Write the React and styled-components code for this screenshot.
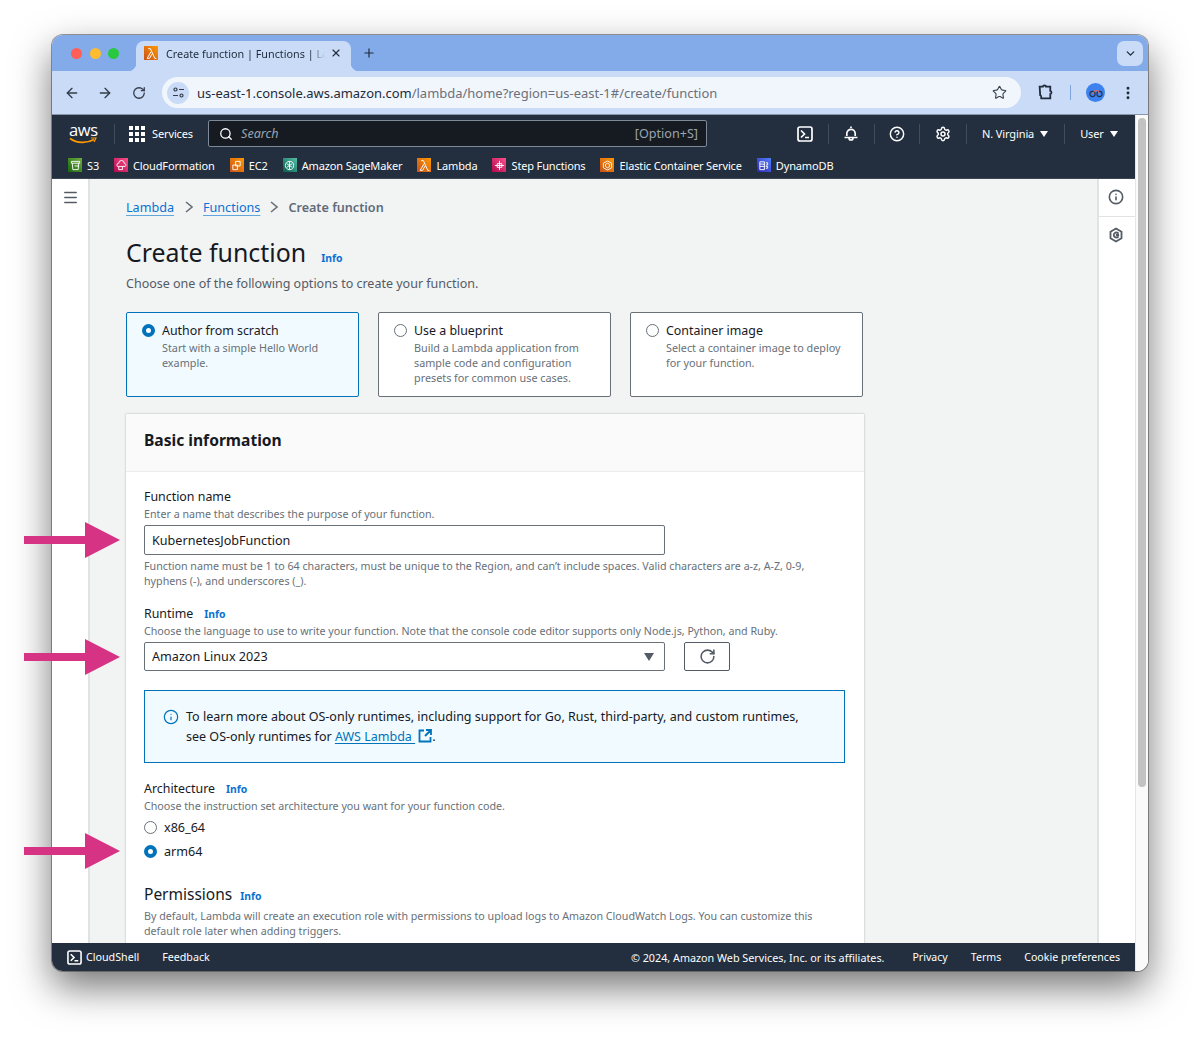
import React from 'react'
import styled, { createGlobalStyle } from 'styled-components'
import {
  ArrowLeft, ArrowRight, RotateCw, Star, MoreVertical, ChevronDown, Search,
  CircleHelp, Settings, Menu, Info, X, Plus,
} from 'lucide-react'

const GlobalStyle = createGlobalStyle`
  html, body { margin: 0; padding: 0; background: #fff; }
  body { font-family: "Noto Sans", "Open Sans", sans-serif; }
  * { box-sizing: border-box; }
`

const Page = styled.div`
  position: relative;
  width: 1200px;
  height: 1040px;
  padding: 35px 52px 69px;
`

const BrowserWindow = styled.div`
  display: flex;
  flex-direction: column;
  height: 936px;
  border-radius: 11px;
  overflow: hidden;
  background: #fff;
  box-shadow: 0 0 0 1px rgba(70, 70, 70, .55), 0 16px 38px rgba(0, 0, 0, .55);
`

const TabStrip = styled.div`
  display: flex;
  align-items: flex-end;
  height: 36px;
  flex: none;
  background: #84abe9;
  position: relative;
`

const Lights = styled.div`
  display: flex;
  gap: 7.500px;
  align-self: center;
  margin: 0 17px 0 19px;
`

const Light = styled.span`
  width: 11px;
  height: 11px;
  border-radius: 50%;
  background: ${p => p.$color};
`

const Tab = styled.div`
  position: relative;
  display: flex;
  align-items: center;
  width: 215px;
  height: 30px;
  padding: 0 0 6px 8px;
  background: #c9dbf6;
  border-radius: 8px 8px 0 0;
  font-size: 10.800px;
  color: #1f2a3a;
  white-space: nowrap;

  &::before, &::after {
    content: "";
    position: absolute;
    bottom: 0;
    width: 8px;
    height: 8px;
  }
  &::before {
    left: -8px;
    background: radial-gradient(circle at 0 0, transparent 8px, #c9dbf6 8.500px);
  }
  &::after {
    right: -8px;
    background: radial-gradient(circle at 100% 0, transparent 8px, #c9dbf6 8.500px);
  }
`

const TabTitle = styled.span`
  width: 164px;
  margin-left: 8px;
  overflow: hidden;
  -webkit-mask-image: linear-gradient(90deg, #000 88%, transparent 97%);
  mask-image: linear-gradient(90deg, #000 88%, transparent 97%);
`

const NewTab = styled.span`
  display: flex;
  align-self: center;
  margin-left: 11px;
  color: #1f2a3a;
`

const TabMenu = styled.span`
  position: absolute;
  right: 5px;
  top: 6px;
  width: 26px;
  height: 25px;
  border-radius: 7px;
  background: #c9dbf6;
  display: flex;
  align-items: center;
  justify-content: center;
  color: #1f2a3a;
`

const Toolbar = styled.div`
  display: flex;
  align-items: center;
  height: 44px;
  flex: none;
  background: #c9dbf6;
  padding: 0 12px 0 11px;
  color: #3a4350;
  border-bottom: 1px solid #8a97a8;
`

const ToolIcon = styled.span`
  display: flex;
  width: 17px;
  justify-content: center;
  margin-right: ${p => p.$gap || 0}px;
  color: #333c48;
`

const Omnibox = styled.div`
  display: flex;
  align-items: center;
  width: 859px;
  height: 31px;
  margin-left: 15px;
  padding: 0 14px 0 5px;
  border-radius: 16px;
  background: #f1f6fd;
  font-size: 12.980px;
  color: #6b7079;
  white-space: nowrap;
`

const SiteBadge = styled.span`
  display: flex;
  align-items: center;
  justify-content: center;
  width: 22px;
  height: 22px;
  border-radius: 50%;
  background: #c9dbf6;
  margin-right: 8px;
  flex: none;
`

const Host = styled.span`
  color: #1f2a3a;
`

const OmniStar = styled.span`
  display: flex;
  margin-left: auto;
  color: #3a4350;
`

const ToolbarRight = styled.div`
  display: flex;
  align-items: center;
  margin-left: 16px;
  color: #1f2a3a;
`

const ToolDivider = styled.span`
  width: 1px;
  height: 15px;
  background: #7ea4dc;
  margin: 0 15px 0 16px;
`

const Avatar = styled.span`
  display: flex;
  align-items: center;
  justify-content: center;
  width: 19px;
  height: 19px;
  border-radius: 50%;
  background: #3b82f0;
  margin-right: 15px;
`

const Viewport = styled.div`
  display: flex;
  flex: 1;
  min-height: 0;
`

const ConsoleColumn = styled.div`
  display: flex;
  flex-direction: column;
  width: 1083px;
  flex: none;
`

const Scrollbar = styled.div`
  flex: 1;
  background: #fafafa;
  border-left: 1px solid #e6e6e6;
  padding: 3px 2px 0 2px;
`

const ScrollThumb = styled.div`
  height: 669px;
  border-radius: 4px;
  background: #c2c2c2;
`

const TopNav = styled.div`
  flex: none;
  height: 64px;
  background: #232f3e;
  color: #fff;
  border-bottom: 1px solid #3a4452;
`

const NavRow = styled.div`
  display: flex;
  align-items: center;
  height: 37px;
  font-size: 11px;
  letter-spacing: -.12px;
`

const AwsLogo = styled.div`
  position: relative;
  width: 29px;
  height: 24px;
  margin-left: 17px;
  flex: none;
`

const AwsText = styled.span`
  display: block;
  font: 16.500px/16px "Open Sans", sans-serif;
  letter-spacing: -.4px;
  color: #fff;
`

const Smile = styled.svg`
  position: absolute;
  left: 0;
  top: 15px;
`

const NavDivider = styled.span`
  width: 1px;
  height: 20px;
  background: #414d5c;
  flex: none;
  margin: 0 ${p => p.$right ?? 15}px 0 ${p => p.$left ?? 15}px;
`

const ServicesGrid = styled.svg`
  flex: none;
  margin-right: 7px;
`

const SearchBox = styled.div`
  display: flex;
  align-items: center;
  flex: none;
  width: 499px;
  height: 27px;
  margin-left: 15px;
  padding: 0 8px 0 10px;
  background: #161b22;
  border: 1px solid #7d8998;
  border-radius: 2px;
  font-size: 12.600px;
  letter-spacing: 0;
  color: #9aa4b0;
`

const SearchHint = styled.span`
  font-style: italic;
  margin-left: 8px;
`

const Shortcut = styled.span`
  margin-left: auto;
`

const NavIcon = styled.span`
  display: flex;
  justify-content: center;
  flex: none;
  width: 16px;
  margin-left: ${p => p.$left ?? 0}px;
`

const Region = styled.span`
  display: flex;
  align-items: center;
  gap: 6px;
  white-space: nowrap;
`

const Caret = styled.span`
  width: 0;
  height: 0;
  border-left: 4.500px solid transparent;
  border-right: 4.500px solid transparent;
  border-top: 6px solid currentColor;
`

const FavRow = styled.div`
  display: flex;
  align-items: center;
  gap: 15px;
  height: 26px;
  padding-left: 16px;
  font-size: 11px;
  letter-spacing: -.14px;
`

const Fav = styled.span`
  display: flex;
  align-items: center;
  gap: 5px;
  white-space: nowrap;
`

const ServiceIcon = styled.span`
  display: flex;
  align-items: center;
  justify-content: center;
  width: 14px;
  height: 14px;
  flex: none;
  background: ${p => p.$bg};
`

const Body = styled.div`
  display: flex;
  flex: 1;
  min-height: 0;
  overflow: hidden;
`

const LeftRail = styled.div`
  width: 38px;
  flex: none;
  background: #fff;
  border-right: 2px solid #e0e3e3;
  padding: 10px 0 0 10px;
  color: #545b64;
`

const Main = styled.div`
  width: 1007px;
  flex: none;
  background: #f2f3f3;
  padding: 18px 0 0 36px;
  overflow: hidden;
`

const RightRail = styled.div`
  flex: 1;
  background: #fff;
  border-left: 2px solid #e0e3e3;
  color: #545b64;
`

const RailButton = styled.div`
  display: flex;
  justify-content: center;
  height: ${p => p.$h}px;
  padding: ${p => p.$top}px 2px 0 0;
  border-bottom: ${p => (p.$line ? '1px solid #e0e3e3' : 'none')};
`

const Breadcrumbs = styled.div`
  display: flex;
  align-items: center;
  height: 20px;
  font-size: 12.600px;
`

const Crumb = styled.a`
  color: #0972d3;
  text-decoration: underline;
  text-underline-offset: 3px;
  text-decoration-color: #5ea6dd;
`

const CrumbSep = styled.svg`
  margin: 0 ${p => p.$right ?? 10}px 0 ${p => p.$left ?? 10}px;
  flex: none;
`

const CrumbCurrent = styled.span`
  color: #5f6b7a;
  font-weight: 600;
`

const TitleRow = styled.div`
  display: flex;
  align-items: baseline;
  margin-top: 18px;
  height: 34px;
`

const Title = styled.h1`
  margin: 0;
  font-size: 24.900px;
  line-height: 34px;
  font-weight: 400;
  color: #16191f;
`

const InfoLink = styled.a`
  margin-left: ${p => p.$left ?? 11}px;
  font-size: 10.400px;
  font-weight: 700;
  color: #0972d3;
`

const Subtitle = styled.p`
  margin: 5px 0 0;
  font-size: 12.500px;
  line-height: 20px;
  color: #545b64;
`

const CardRow = styled.div`
  display: flex;
  gap: 19px;
  margin-top: 18px;
`

const OptionCard = styled.div`
  display: flex;
  gap: 7px;
  width: 233px;
  height: 85px;
  padding: 11px 15px;
  border-radius: 2px;
  border: 1px solid ${p => (p.$active ? '#0073bb' : '#687078')};
  background: ${p => (p.$active ? '#f1faff' : '#fff')};
`

const Radio = styled.span`
  display: block;
  flex: none;
  width: 13px;
  height: 13px;
  margin-top: ${p => p.$top ?? 0}px;
  border-radius: 50%;
  background: #fff;
  border: ${p => (p.$on ? '4px solid #0073bb' : '1px solid #687078')};
`

const OptionTitle = styled.div`
  font-size: 12.400px;
  line-height: 14px;
  color: #16191f;
`

const OptionText = styled.div`
  margin-top: 2px;
  font-size: 10.800px;
  line-height: 15px;
  color: #687078;
`

const Panel = styled.section`
  width: 738px;
  height: 600px;
  margin-top: 17px;
  background: #fff;
  box-shadow: 0 0 2px rgba(0, 28, 36, .3);
`

const PanelHead = styled.div`
  height: 58px;
  padding: 16px 18px 0;
  background: #fafafa;
  border-bottom: 1px solid #eaeded;
  font-size: 15.600px;
  line-height: 20px;
  font-weight: 700;
  color: #16191f;
`

const PanelBody = styled.div`
  padding: 17px 18px 0;
`

const FieldLabel = styled.div`
  display: flex;
  align-items: baseline;
  margin-top: ${p => p.$top ?? 0}px;
  font-size: 12.400px;
  line-height: 16px;
  color: #16191f;
`

const SectionLabel = styled(FieldLabel)`
  font-size: 15.500px;
  line-height: 20px;
`

const Hint = styled.div`
  margin-top: ${p => p.$top ?? 2}px;
  font-size: 10.700px;
  line-height: 15px;
  color: #687078;
  white-space: nowrap;
`

const InputBox = styled.div`
  display: flex;
  align-items: center;
  width: 521px;
  height: 30px;
  margin-top: 3px;
  padding: 0 7px;
  background: #fff;
  border: 1px solid #687078;
  border-radius: 2px;
  font-size: 12.600px;
  color: #16191f;
`

const SelectRow = styled.div`
  display: flex;
  gap: 19px;
  margin-top: 3px;
`

const SelectBox = styled(InputBox)`
  justify-content: space-between;
  margin-top: 0;
  height: 29px;
  padding-right: 10px;
  color: #16191f;
`

const SelectCaret = styled(Caret)`
  color: #545b64;
  border-left-width: 5px;
  border-right-width: 5px;
  border-top-width: 8px;
`

const RefreshButton = styled.div`
  display: flex;
  align-items: center;
  justify-content: center;
  width: 46px;
  height: 29px;
  border: 1px solid #545b64;
  border-radius: 2px;
  color: #545b64;
`

const Alert = styled.div`
  display: flex;
  gap: 7px;
  width: 701px;
  height: 73px;
  margin-top: 19px;
  padding: 16px 18px;
  background: #f1faff;
  border: 1px solid #0073bb;
  font-size: 12.530px;
  line-height: 20px;
  color: #16191f;
`

const AlertIcon = styled.span`
  display: flex;
  flex: none;
  margin-top: 2px;
  color: #0073bb;
`

const AlertLink = styled.a`
  color: #0073bb;
  text-decoration: underline;
  text-underline-offset: 2px;
`

const ExternalIcon = styled.svg`
  vertical-align: -2px;
  margin-left: 3px;
`

const RadioRow = styled.div`
  display: flex;
  align-items: center;
  gap: 7px;
  height: 24px;
  font-size: 12.600px;
  color: #16191f;
`

const RadioGroup = styled.div`
  margin-top: 1px;
`

const CallArrow = styled.svg`
  position: absolute;
  left: 24px;
  top: ${p => p.$top}px;
`

const Footer = styled.div`
  display: flex;
  align-items: center;
  flex: none;
  height: 28px;
  padding: 0 15px 0 15px;
  background: #232f3e;
  color: #fff;
  font-size: 10.700px;
  white-space: nowrap;
`

const FooterLink = styled.span`
  display: flex;
  align-items: center;
  gap: 4px;
  margin-left: ${p => p.$left ?? 0}px;
`

const FooterRight = styled.div`
  display: flex;
  gap: 23px;
  margin-left: auto;
  font-size: 10.600px;
`

const Copyright = styled.span`
  font-size: 10.770px;
  margin-right: 5px;
`

const TerminalIcon = ({ size = 16 }) => (
  <svg width={size} height={size} viewBox="0 0 16 16" fill="none" stroke="currentColor" strokeWidth="1.700">
    <rect x="1" y="1" width="14" height="14" rx="2" />
    <path d="M4 4.500 7.500 8 4 11.500M8 11.500h4" />
  </svg>
)

const ConsoleBell = () => (
  <svg width="17" height="17" viewBox="0 0 16 16" fill="none" stroke="currentColor" strokeWidth="1.700">
    <path d="M8 1v1.500M3.800 10.500V8a4.200 4.200 0 0 1 8.400 0v2.500M1.500 12h13M6 12.500a2 2 0 0 0 4 0" />
  </svg>
)

const LambdaGlyph = () => (
  <svg width="13" height="13" viewBox="0 0 12 12" fill="none" stroke="#fff" strokeWidth=".9">
    <path d="M3 1.500h2L9 10.500h1.500M5.500 4.500 2 10.500h2.200L6.500 6.500" />
  </svg>
)

const BoxGlyph = ({ d }) => (
  <svg width="11" height="11" viewBox="0 0 12 12" fill="none" stroke="#fff" strokeWidth="1">
    <path d={d} />
  </svg>
)

const services = [
  { name: 'S3', bg: 'linear-gradient(45deg, #1b660f, #6cae3e)', icon: <BoxGlyph d="M1.500 1.500h9v2h-9zM2.500 3.500l.6 7h5.800l.6-7M5 6.500h5" /> },
  { name: 'CloudFormation', bg: 'linear-gradient(45deg, #b0084d, #ff4f8b)', icon: <BoxGlyph d="M3 7.500a2 2 0 0 1 0-4 3 3 0 0 1 6 0 2 2 0 0 1 1 3.500H3zM3 7.500v3h4v-3" /> },
  { name: 'EC2', bg: 'linear-gradient(45deg, #c8511b, #ff9900)', icon: <BoxGlyph d="M5 1.500h5v5H5zM2 5.500h5v5H2z" /> },
  { name: 'Amazon SageMaker', bg: 'linear-gradient(45deg, #055f4e, #56c0a7)', icon: <BoxGlyph d="M6 1.500a4.500 4.500 0 1 0 0 9 4.500 4.500 0 0 0 0-9zM6 1.500v9M3 4l3 2 3-2M3 8l3-2 3 2" /> },
  { name: 'Lambda', bg: 'linear-gradient(45deg, #c8511b, #ff9900)', icon: <LambdaGlyph /> },
  { name: 'Step Functions', bg: 'linear-gradient(45deg, #b0084d, #ff4f8b)', icon: <BoxGlyph d="M6 1v10M1 6h10M3.500 4h5v4h-5z" /> },
  { name: 'Elastic Container Service', bg: 'linear-gradient(45deg, #c8511b, #ff9900)', icon: <BoxGlyph d="M6 1 10.500 3.500v5L6 11 1.500 8.500v-5zM6 3.500l2.200 1.300v2.400L6 8.500 3.800 7.200V4.800z" /> },
  { name: 'DynamoDB', bg: 'linear-gradient(45deg, #2e27ad, #527fff)', icon: <BoxGlyph d="M2 2h5v8.500H2zM2 4.500h5M2 7h5M8.500 3h2v2.500h-2M8.500 7h2v2h-2" /> },
]

const BlockArrow = ({ top }) => (
  <CallArrow $top={top} width="96" height="36" viewBox="0 0 96 36">
    <path d="M0 14h61V0l35 18-35 18V22H0z" fill="#d63384" />
  </CallArrow>
)

const App = () => {
  return (
    <Page>
      <GlobalStyle />
      <BrowserWindow>
        <TabStrip>
          <Lights>
            <Light $color="#fe5f57" />
            <Light $color="#febc2e" />
            <Light $color="#28c840" />
          </Lights>
          <Tab>
            <ServiceIcon $bg="linear-gradient(45deg, #c8511b, #ff9900)"><LambdaGlyph /></ServiceIcon>
            <TabTitle>Create function | Functions | Lambda</TabTitle>
            <X size={12} strokeWidth={2.200} />
          </Tab>
          <NewTab><Plus size={14} strokeWidth={2} /></NewTab>
          <TabMenu><ChevronDown size={13} strokeWidth={2.400} /></TabMenu>
        </TabStrip>

        <Toolbar>
          <ToolIcon $gap={16}><ArrowLeft size={16} /></ToolIcon>
          <ToolIcon $gap={17}><ArrowRight size={16} /></ToolIcon>
          <ToolIcon><RotateCw size={14} strokeWidth={2.200} /></ToolIcon>
          <Omnibox>
            <SiteBadge>
              <svg width="13" height="13" viewBox="0 0 13 13" fill="none" stroke="#333c48" strokeWidth="1.200">
                <circle cx="3.500" cy="3.500" r="1.500" />
                <path d="M7 3.500h5M1 9.500h5" />
                <circle cx="9.500" cy="9.500" r="1.500" />
              </svg>
            </SiteBadge>
            <Host>us-east-1.console.aws.amazon.com</Host>/lambda/home?region=us-east-1#/create/function
            <OmniStar><Star size={15} strokeWidth={1.800} /></OmniStar>
          </Omnibox>
          <ToolbarRight>
            <svg width="17" height="17" viewBox="0 0 16 16" fill="none" stroke="currentColor" strokeWidth="1.700">
              <path d="M2.500 2.500h3c0-1.500 3-1.500 3 0h4v4c1.500 0 1.500 3 0 3v4h-8.500c0-1.500 0-3-1-3z" />
            </svg>
            <ToolDivider />
            <Avatar>
              <svg width="14" height="10" viewBox="0 0 14 10" fill="none" stroke="#26324a" strokeWidth="1.100">
                <circle cx="3.500" cy="6" r="2.600" />
                <circle cx="10.500" cy="6" r="2.600" />
                <path d="M3.500 6 6 2.500h3L10.500 6" stroke="#e06a5a" />
              </svg>
            </Avatar>
            <MoreVertical size={16} strokeWidth={2.400} />
          </ToolbarRight>
        </Toolbar>

        <Viewport>
          <ConsoleColumn>
            <TopNav>
              <NavRow>
                <AwsLogo>
                  <AwsText>aws</AwsText>
                  <Smile width="28" height="9" viewBox="0 0 28 9" fill="none">
                    <path d="M1 1.500c7 5 17 5 24 1" stroke="#ff9900" strokeWidth="1.600" />
                    <path d="M22 1h5l-2 4" stroke="#ff9900" strokeWidth="1.200" />
                  </Smile>
                </AwsLogo>
                <NavDivider $left={16} $right={14} />
                <ServicesGrid width="16" height="16" viewBox="0 0 16 16" fill="#fff">
                  {[0, 6, 12].flatMap(y => [0, 6, 12].map(x => (
                    <rect key={`${x}-${y}`} x={x} y={y} width="4" height="4" />
                  )))}
                </ServicesGrid>
                Services
                <SearchBox>
                  <Search size={14} color="#fff" strokeWidth={2.200} />
                  <SearchHint>Search</SearchHint>
                  <Shortcut>[Option+S]</Shortcut>
                </SearchBox>
                <NavIcon $left={90}><TerminalIcon /></NavIcon>
                <NavDivider $left={15} $right={14} />
                <NavIcon><ConsoleBell /></NavIcon>
                <NavDivider $left={15} $right={14} />
                <NavIcon><CircleHelp size={16} strokeWidth={2.200} /></NavIcon>
                <NavDivider $left={14} $right={15} />
                <NavIcon><Settings size={16} strokeWidth={2.200} /></NavIcon>
                <NavDivider $left={15} />
                <Region>N. Virginia <Caret /></Region>
                <NavDivider $left={16} />
                <Region>User <Caret /></Region>
              </NavRow>
              <FavRow>
                {services.map(s => (
                  <Fav key={s.name}>
                    <ServiceIcon $bg={s.bg}>{s.icon}</ServiceIcon>
                    {s.name}
                  </Fav>
                ))}
              </FavRow>
            </TopNav>

            <Body>
              <LeftRail><Menu size={17} strokeWidth={2.200} /></LeftRail>
              <Main>
                <Breadcrumbs>
                  <Crumb>Lambda</Crumb>
                  <CrumbSep $left={11} width="8" height="12" viewBox="0 0 8 12" fill="none" stroke="#687078" strokeWidth="1.600"><path d="m1 1 6 5-6 5" /></CrumbSep>
                  <Crumb>Functions</Crumb>
                  <CrumbSep width="8" height="12" viewBox="0 0 8 12" fill="none" stroke="#687078" strokeWidth="1.600"><path d="m1 1 6 5-6 5" /></CrumbSep>
                  <CrumbCurrent>Create function</CrumbCurrent>
                </Breadcrumbs>
                <TitleRow>
                  <Title>Create function</Title>
                  <InfoLink $left={15}>Info</InfoLink>
                </TitleRow>
                <Subtitle>Choose one of the following options to create your function.</Subtitle>

                <CardRow>
                  <OptionCard $active>
                    <Radio $on />
                    <div>
                      <OptionTitle>Author from scratch</OptionTitle>
                      <OptionText>Start with a simple Hello World<br />example.</OptionText>
                    </div>
                  </OptionCard>
                  <OptionCard>
                    <Radio />
                    <div>
                      <OptionTitle>Use a blueprint</OptionTitle>
                      <OptionText>Build a Lambda application from<br />sample code and configuration<br />presets for common use cases.</OptionText>
                    </div>
                  </OptionCard>
                  <OptionCard>
                    <Radio />
                    <div>
                      <OptionTitle>Container image</OptionTitle>
                      <OptionText>Select a container image to deploy<br />for your function.</OptionText>
                    </div>
                  </OptionCard>
                </CardRow>

                <Panel>
                  <PanelHead>Basic information</PanelHead>
                  <PanelBody>
                    <FieldLabel>Function name</FieldLabel>
                    <Hint>Enter a name that describes the purpose of your function.</Hint>
                    <InputBox>KubernetesJobFunction</InputBox>
                    <Hint $top={4}>Function name must be 1 to 64 characters, must be unique to the Region, and can’t include spaces. Valid characters are a-z, A-Z, 0-9,<br />hyphens (-), and underscores (_).</Hint>

                    <FieldLabel $top={17}>Runtime <InfoLink>Info</InfoLink></FieldLabel>
                    <Hint>Choose the language to use to write your function. Note that the console code editor supports only Node.js, Python, and Ruby.</Hint>
                    <SelectRow>
                      <SelectBox>Amazon Linux 2023 <SelectCaret /></SelectBox>
                      <RefreshButton><RotateCw size={17} strokeWidth={2.200} /></RefreshButton>
                    </SelectRow>

                    <Alert>
                      <AlertIcon><Info size={16} strokeWidth={1.800} /></AlertIcon>
                      <div>
                        To learn more about OS-only runtimes, including support for Go, Rust, third-party, and custom runtimes,<br />
                        see OS-only runtimes for <AlertLink>AWS Lambda </AlertLink>
                        <ExternalIcon width="14" height="14" viewBox="0 0 14 14" fill="none" stroke="#0073bb" strokeWidth="1.800">
                          <path d="M6 1.500H1.500v11h11V8M8 1h5v5M13 1 7 7" />
                        </ExternalIcon>.
                      </div>
                    </Alert>

                    <FieldLabel $top={18}>Architecture <InfoLink>Info</InfoLink></FieldLabel>
                    <Hint>Choose the instruction set architecture you want for your function code.</Hint>
                    <RadioGroup>
                      <RadioRow><Radio />x86_64</RadioRow>
                      <RadioRow><Radio $on />arm64</RadioRow>
                    </RadioGroup>

                    <SectionLabel $top={21}>Permissions <InfoLink $left={8}>Info</InfoLink></SectionLabel>
                    <Hint $top={3}>By default, Lambda will create an execution role with permissions to upload logs to Amazon CloudWatch Logs. You can customize this<br />default role later when adding triggers.</Hint>
                  </PanelBody>
                </Panel>
              </Main>
              <RightRail>
                <RailButton $h={38} $top={10} $line><Info size={16} strokeWidth={2.400} /></RailButton>
                <RailButton $h={38} $top={10}>
                  <svg width="16" height="16" viewBox="0 0 16 16" fill="none" stroke="currentColor" strokeWidth="1.800">
                    <path d="M8 1.500 13.500 4.700v6.600L8 14.500l-5.500-3.200V4.700z" />
                    <path d="M10.500 6.500A2.600 2.600 0 1 0 10.500 9.500" />
                    <circle cx="9.500" cy="8" r=".9" fill="currentColor" />
                  </svg>
                </RailButton>
              </RightRail>
            </Body>

            <Footer>
              <FooterLink><TerminalIcon size={15} /> CloudShell</FooterLink>
              <FooterLink $left={23}>Feedback</FooterLink>
              <FooterRight>
                <Copyright>© 2024, Amazon Web Services, Inc. or its affiliates.</Copyright>
                <span>Privacy</span>
                <span>Terms</span>
                <span>Cookie preferences</span>
              </FooterRight>
            </Footer>
          </ConsoleColumn>
          <Scrollbar><ScrollThumb /></Scrollbar>
        </Viewport>
      </BrowserWindow>

      <BlockArrow top={522} />
      <BlockArrow top={639} />
      <BlockArrow top={833} />
    </Page>
  )
}

export default App
